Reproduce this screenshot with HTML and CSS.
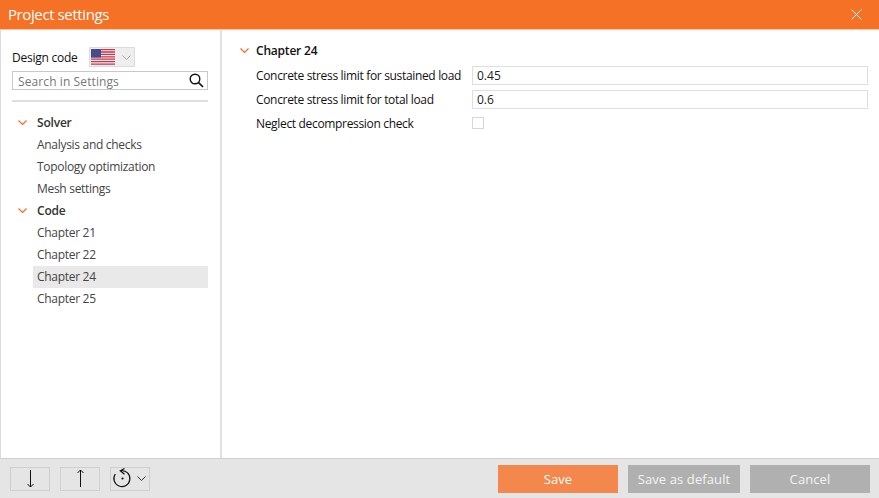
FILE: index.html
```html
<!DOCTYPE html>
<html lang="en">
<head>
<meta charset="utf-8">
<title>Project settings</title>
<link rel="stylesheet" href="styles.css">
</head>
<body>
<div class="window">
  <header class="titlebar">
    <span class="title">Project settings</span>
    <svg class="close" width="11" height="11" viewBox="0 0 11 11"><path d="M.5.5l10 10M10.500.5l-10 10" stroke="#fff" fill="none"/></svg>
  </header>
  <div class="main">
    <aside class="side">
      <div class="code-row">
        <span class="code-label">Design code</span>
        <div class="code-select">
          <svg class="flag" width="24" height="16" viewBox="0 0 24 16">
            <rect width="24" height="16" fill="#f4eeee"/>
            <path d="M0 .6h24M0 3h24M0 5.400h24M0 7.800h24M0 10.200h24M0 12.600h24M0 15.200h24" stroke="#c2384c" stroke-width="1.300"/>
            <rect width="10" height="8.500" fill="#454c8e"/>
          </svg>
          <svg class="caret" width="9" height="5" viewBox="0 0 9 5"><path d="M.5.500l4 4 4-4" stroke="#a9a9a9" fill="none"/></svg>
        </div>
      </div>
      <div class="search">
        <span class="search-text">Search in Settings</span>
        <svg class="search-icon" width="15" height="15" viewBox="0 0 15 15"><circle cx="6" cy="6" r="4.800" stroke="#111" stroke-width="1.400" fill="none"/><path d="M9.500 9.500l4.500 4.500" stroke="#111" stroke-width="1.700"/></svg>
      </div>
      <div class="divider"></div>
      <nav class="tree">
        <div class="group"><svg class="chev" width="9" height="5" viewBox="0 0 9 5"><path d="M.5.500l4 4 4-4" stroke="#f26a20" stroke-width="1.100" fill="none"/></svg><span>Solver</span></div>
        <div class="item">Analysis and checks</div>
        <div class="item">Topology optimization</div>
        <div class="item">Mesh settings</div>
        <div class="group"><svg class="chev" width="9" height="5" viewBox="0 0 9 5"><path d="M.5.500l4 4 4-4" stroke="#f26a20" stroke-width="1.100" fill="none"/></svg><span>Code</span></div>
        <div class="item">Chapter 21</div>
        <div class="item">Chapter 22</div>
        <div class="item active">Chapter 24</div>
        <div class="item">Chapter 25</div>
      </nav>
    </aside>
    <section class="content">
      <div class="section-head"><svg class="chev" width="9" height="5" viewBox="0 0 9 5"><path d="M.5.500l4 4 4-4" stroke="#f26a20" stroke-width="1.100" fill="none"/></svg><span>Chapter 24</span></div>
      <div class="form">
        <div class="field"><label class="field-label">Concrete stress limit for sustained load</label><div class="input">0.45</div></div>
        <div class="field"><label class="field-label">Concrete stress limit for total load</label><div class="input">0.6</div></div>
        <div class="field"><label class="field-label">Neglect decompression check</label><div class="check"></div></div>
      </div>
    </section>
  </div>
  <footer class="footer">
    <div class="tools">
      <div class="tool"><svg width="9" height="19" viewBox="0 0 9 19"><path d="M4.500 1v17M1.500 15l3 3 3-3" stroke="#111" fill="none"/></svg></div>
      <div class="tool"><svg width="9" height="19" viewBox="0 0 9 19"><path d="M4.500 18V1M1.500 4l3-3 3 3" stroke="#111" fill="none"/></svg></div>
      <div class="tool tool-reset">
        <svg width="20" height="21" viewBox="0 0 20 21"><path d="M9 2.600A8 8 0 1 1 3.300 6" stroke="#111" stroke-width="1.200" fill="none"/><path d="M12.500 .5L8.300 2.800 12.500 6.200" stroke="#111" stroke-width="1.200" fill="none"/><circle cx="10.500" cy="10.500" r="1.100" fill="#111"/></svg>
        <svg width="9" height="5" viewBox="0 0 9 5"><path d="M.5.500l4 4 4-4" stroke="#333" fill="none"/></svg>
      </div>
    </div>
    <div class="actions">
      <button class="btn btn-primary">Save</button>
      <button class="btn btn-wide">Save as default</button>
      <button class="btn">Cancel</button>
    </div>
  </footer>
</div>
</body>
</html>
```
FILE: styles.css
```css
* { box-sizing: border-box; }
html, body { margin: 0; height: 100%; }
body { font-family: "Open Sans", "Noto Sans", sans-serif; font-size: 12px; color: #222; background: #fff; }
.window { width: 879px; height: 498px; display: flex; flex-direction: column; overflow: hidden; }
.titlebar { height: 30px; flex: none; background: #f57125; border-bottom: 1px solid #f9c5a5; display: flex; align-items: center; justify-content: space-between; padding: 0 17px 1px 8px; }
.title { color: #fff; font-size: 15px; letter-spacing: -.4px; }
.main { flex: 1; display: flex; min-height: 0; }
.side { width: 222px; flex: none; border-left: 1px solid #dcdcdc; border-right: 2px solid #e1e1e1; padding: 16px 12px 0 11px; display: flex; flex-direction: column; }
.code-row { display: flex; align-items: center; height: 22px; }
.code-label { width: 77px; color: #111; letter-spacing: -.25px; }
.code-select { width: 46px; height: 20px; background: #eeeeee; border: 1px solid #dcdcdc; display: flex; align-items: center; padding-left: 1px; gap: 7px; }
.search { margin-top: 3px; height: 19px; width: 196px; border: 1px solid #c8c8c8; display: flex; align-items: center; justify-content: space-between; padding: 2px 3px 0 5px; }
.search-text { color: #777; letter-spacing: .1px; }
.search-icon { margin-top: -2px; }
.divider { margin-top: 10px; height: 2px; width: 196px; background: #dfdfdf; }
.tree { margin-top: 10px; display: flex; flex-direction: column; }
.group { height: 22px; display: flex; align-items: center; font-weight: 600; color: #333; padding: 0 0 2px 6px; letter-spacing: -.2px; }
.chev { flex: none; margin-right: 10px; }
.item { height: 22px; line-height: 22px; margin-left: 21px; padding-left: 4px; width: 175px; color: #444; letter-spacing: -.3px; }
.active { background: #e9e9e9; }
.content { flex: 1; padding: 11px 11px 0 18px; min-width: 0; }
.section-head { height: 18px; display: flex; align-items: center; font-weight: 600; color: #111; letter-spacing: -.2px; }
.section-head .chev { margin-right: 7px; }
.form { margin-top: 6px; display: flex; flex-direction: column; gap: 4px; padding-left: 16px; }
.field { display: flex; align-items: center; height: 20px; }
.field-label { width: 216px; flex: none; color: #111; letter-spacing: -.33px; }
.input { flex: 1; height: 19px; border: 1px solid #dfdfdf; line-height: 17px; padding-left: 4px; color: #222; }
.check { width: 12px; height: 12px; border: 1px solid #d8d8d8; }
.footer { height: 40px; flex: none; background: #e5e5e5; border-top: 1px solid #cfcfcf; display: flex; align-items: center; justify-content: space-between; padding: 0 9px 0 10px; }
.tools { display: flex; gap: 10px; }
.tool { width: 40px; height: 24px; border: 1px solid #cfcfcf; display: flex; align-items: center; justify-content: center; }
.tool-reset { gap: 5px; justify-content: flex-start; padding-left: 1px; }
.actions { display: flex; gap: 10px; }
.btn { width: 120px; height: 28px; border: 0; background: #b0b0b0; color: #f4f4f4; font: inherit; font-size: 13px; letter-spacing: .1px; padding: 1px 0 0; }
.btn-wide { width: 112px; }
.btn-primary { background: #f4874c; color: #fff; }
```
